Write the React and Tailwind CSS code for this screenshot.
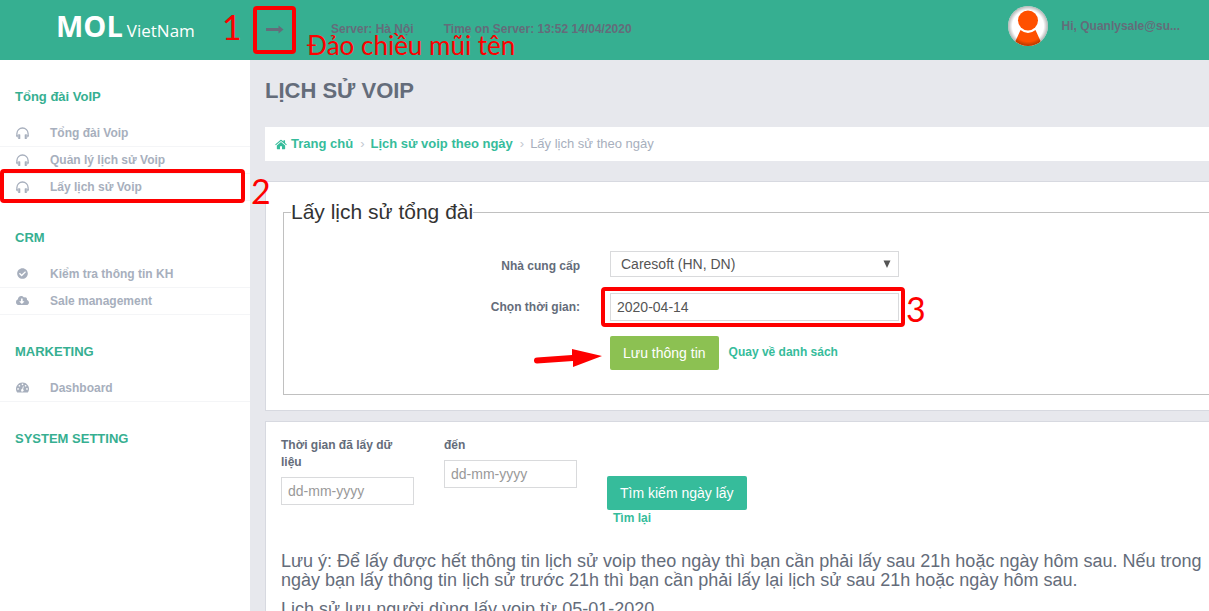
import React from "react";
import { FaCheckCircle, FaCloudDownloadAlt } from "react-icons/fa";

function HeadphonesIcon() {
  return (
    <svg viewBox="0 0 13 12" className="h-3 w-[13px]" fill="none" aria-hidden="true">
      <path d="M0.9 9.5V6.6a5.6 5.6 0 0 1 11.2 0v2.9" stroke="currentColor" strokeWidth="1.3" />
      <path
        d="M2.2 7.200h1.300q.8 0 .8.6v3.600q0 .6-.8.6H2.200zM10.800 7.200H9.500q-.8 0-.8.6v3.600q0 .6.8.6h1.300z"
        fill="currentColor"
      />
      <path d="M0.3 8h1.400v2.800Q.3 10.300.3 8zM12.700 8h-1.400v2.800q1.400-.5 1.400-2.800z" fill="currentColor" />
    </svg>
  );
}

function CheckIcon() {
  return <FaCheckCircle className="ml-px size-[11px]" aria-hidden="true" />;
}

function CloudIcon() {
  return <FaCloudDownloadAlt className="size-[13px]" aria-hidden="true" />;
}

function GaugeIcon() {
  return (
    <svg viewBox="0 0 14 11" className="h-[11px] w-[13px]" aria-hidden="true">
      <path d="M7 0a7 7 0 0 1 5.900 10.700q-.2.300-.5.300H1.600q-.3 0-.5-.3A7 7 0 0 1 7 0z" fill="currentColor" />
      <g fill="#fff">
        <circle cx="2.200" cy="7" r="0.900" />
        <circle cx="3.700" cy="3.600" r="0.900" />
        <circle cx="7" cy="2.100" r="0.900" />
        <circle cx="10.300" cy="3.600" r="0.900" />
        <circle cx="11.800" cy="7" r="0.900" />
        <path d="M7.500 4.200l.9.2-.8 3A1.400 1.400 0 1 1 6.700 7.200z" />
      </g>
    </svg>
  );
}

function HomeIcon() {
  return (
    <svg viewBox="0 0 13 11" className="h-[11px] w-3" fill="currentColor" aria-hidden="true">
      <path d="M6.500 2.800 11 6.500v3.600q0 .5-.5.500H7.600V7.500H5.400v3.100H2.500q-.5 0-.5-.5V6.500z" />
      <path d="M5.900.6q.6-.4 1.200 0L9.200 2.300V.8h1.700v3L12.800 5.400l-.7.800L6.500 1.600.9 6.200l-.7-.8z" />
    </svg>
  );
}

const sections = [
  {
    title: "Tổng đài VoIP",
    items: [
      { label: "Tổng đài Voip", Icon: HeadphonesIcon },
      { label: "Quản lý lịch sử Voip", Icon: HeadphonesIcon },
      { label: "Lấy lịch sử Voip", Icon: HeadphonesIcon, mark: "2" },
    ],
  },
  {
    title: "CRM",
    items: [
      { label: "Kiểm tra thông tin KH", Icon: CheckIcon },
      { label: "Sale management", Icon: CloudIcon },
    ],
  },
  { title: "MARKETING", items: [{ label: "Dashboard", Icon: GaugeIcon }] },
  { title: "SYSTEM SETTING", items: [] },
];

const noteFont = "font-['Lato','Open_Sans',sans-serif] font-normal text-[#fe0000] whitespace-nowrap pointer-events-none";

function Header() {
  return (
    <header className="flex h-[60px] shrink-0 items-center bg-[#36af91] text-xs font-bold text-[#646c7a]">
      <a
        href="#home"
        className="flex w-[250px] shrink-0 items-baseline gap-1 pb-2 pl-14 font-['Open_Sans',sans-serif] text-white"
      >
        <span className="text-[29px] leading-9 font-bold">MOL</span>
        <span className="text-[17px] font-normal">VietNam</span>
      </a>
      <div className="relative flex flex-1 items-center pb-[2px]">
        <button type="button" aria-label="Thu gọn menu" className="ml-4 flex h-6 w-[18px] items-center">
          <svg viewBox="0 0 18 9" className="h-[9px] w-[18px]" fill="currentColor" aria-hidden="true">
            <path d="M0 3h12.500V0.500L17.500 4.500l-5 4V6H0z" />
          </svg>
        </button>
        <span className="ml-[47px] whitespace-nowrap">Server: Hà Nội</span>
        <span className="ml-[30px] whitespace-nowrap">Time on Server: 13:52 14/04/2020</span>
        <span className="absolute -top-[11px] left-[3px] h-12 w-[43px] rounded-sm border-4 border-[#fe0000]" />
        <span className={`absolute -top-[10px] -left-7 text-[34px] leading-10 ${noteFont}`}>1</span>
        <span className={`absolute top-3 left-[57px] text-[26px] leading-8 ${noteFont}`}>Đảo chiều mũi tên</span>
      </div>
      <a href="#account" className="flex shrink-0 items-center gap-[14px] pr-[29px] pb-2">
        <svg viewBox="0 0 40 40" className="size-10" aria-hidden="true">
          <defs>
            <radialGradient id="rim">
              <stop offset="0.78" stopColor="#000" stopOpacity="0" />
              <stop offset="1" stopColor="#000" stopOpacity="0.3" />
            </radialGradient>
            <clipPath id="disc">
              <circle cx="20" cy="20" r="20" />
            </clipPath>
          </defs>
          <g clipPath="url(#disc)">
            <rect width="40" height="40" fill="#fff" />
            <circle cx="20" cy="14.5" r="10" fill="#ff5000" />
            <path d="M12.500 24q7.500 6 15 0L32.500 35v7h-25v-7z" fill="#ff5000" />
            <circle cx="20" cy="20" r="20" fill="url(#rim)" />
          </g>
        </svg>
        <span>Hi, Quanlysale@su...</span>
      </a>
    </header>
  );
}

function Sidebar() {
  return (
    <nav className="w-[250px] shrink-0 bg-white">
      {sections.map(({ title, items }) => (
        <section key={title}>
          <h2 className="pt-[27px] pb-[13px] pl-[15px] text-[13px] leading-5 font-bold text-[#36af91]">{title}</h2>
          <ul>
            {items.map(({ label, Icon, mark }) => (
              <li key={label} className="relative">
                <a
                  href="#menu"
                  className="flex h-[27px] items-center border-b border-[#f4f5f7] pb-px pl-4 text-xs font-bold text-[#a7afbd]"
                >
                  <span className="flex w-[34px]">
                    <Icon />
                  </span>
                  {label}
                </a>
                {mark && (
                  <>
                    <span className="absolute -top-[5px] left-0 h-[34px] w-[245px] rounded-sm border-4 border-[#fe0000]" />
                    <span className={`absolute -top-[3px] left-[251px] text-[34px] leading-10 ${noteFont}`}>{mark}</span>
                  </>
                )}
              </li>
            ))}
          </ul>
        </section>
      ))}
    </nav>
  );
}

function Breadcrumb() {
  return (
    <nav className="mt-5 flex h-[34px] items-center bg-white pl-[10px] text-[13px] text-[#a7afbd]">
      <a href="#home" className="flex items-center gap-1 font-bold text-[#36bc9b]">
        <HomeIcon />
        Trang chủ
      </a>
      <span className="pr-[6px] pl-[7px] text-[#c3c8d0]">›</span>
      <a href="#history" className="font-bold text-[#36bc9b]">
        Lịch sử voip theo ngày
      </a>
      <span className="pr-[6px] pl-[7px] text-[#c3c8d0]">›</span>
      <span>Lấy lịch sử theo ngày</span>
    </nav>
  );
}

const field = "border border-[#d9dadc] bg-white px-[6px] text-sm text-[#555] placeholder:text-[#999]";

function FetchForm() {
  return (
    <section className="mt-5 border border-r-0 border-[#d7d9e0] bg-white py-[15px] pl-[17px]">
      <fieldset className="border border-r-0 border-[#c0c0c0] pb-6 pl-[7px]">
        <legend className="text-[21px] leading-[30px] text-[#333]">Lấy lịch sử tổng đài</legend>
        <div className="mt-6 grid grid-cols-[289px_289px] gap-x-[30px] text-xs font-bold text-[#646c7a]">
          <label htmlFor="vendor" className="pt-[7px] text-right leading-[17px]">
            Nhà cung cấp
          </label>
          <div className="relative h-[26px] font-normal">
            <select id="vendor" className={`size-full appearance-none pl-[10px] ${field}`} defaultValue="caresoft">
              <option value="caresoft">Caresoft (HN, DN)</option>
            </select>
            <svg
              viewBox="0 0 8 8"
              className="pointer-events-none absolute top-[9px] right-2 size-2"
              fill="#555"
              aria-hidden="true"
            >
              <path d="M0.500 0.500h7L4 8z" />
            </svg>
          </div>
          <label htmlFor="date" className="mt-4 pt-[6px] text-right leading-[17px]">
            Chọn thời gian:
          </label>
          <div className="relative mt-4 h-7 font-normal">
            <input id="date" type="text" className={`size-full ${field}`} defaultValue="2020-04-14" />
            <span className="pointer-events-none absolute -top-[6px] -left-[9px] h-10 w-[304px] rounded-sm border-4 border-[#fe0000]" />
            <span className={`absolute -top-1 left-[296px] text-[34px] leading-10 ${noteFont}`}>3</span>
          </div>
          <div className="relative col-start-2 mt-[15px] flex gap-[10px]">
            <button type="submit" className="h-[34px] rounded-xs bg-[#8cc152] px-[13px] text-sm font-normal text-white">
              Lưu thông tin
            </button>
            <a href="#list" className="pt-[8px] leading-[17px] text-[#36bc9b]">
              Quay về danh sách
            </a>
            <svg viewBox="0 0 70 20" className="absolute top-3 -left-[77px] h-5 w-[70px]" fill="#fe0000" aria-hidden="true">
              <path d="M4 9.500 39 7V1l30 7L40 19v-6L4 15.500a3 3 0 0 1 0-6z" />
            </svg>
          </div>
        </div>
      </fieldset>
    </section>
  );
}

function SearchPanel() {
  return (
    <section className="mt-[10px] border border-r-0 border-[#d7d9e0] bg-white px-[15px] pt-[15px] pb-5 text-[#646c7a]">
      <form className="flex items-start gap-[30px] text-xs leading-[17px] font-bold">
        <div className="w-[133px]">
          <label htmlFor="from">Thời gian đã lấy dữ liệu</label>
          <input id="from" placeholder="dd-mm-yyyy" className={`mt-[6px] block h-7 w-full font-normal ${field}`} />
        </div>
        <div className="w-[133px]">
          <label htmlFor="to" className="block">
            đến
          </label>
          <input id="to" placeholder="dd-mm-yyyy" className={`mt-[6px] block h-7 w-full font-normal ${field}`} />
        </div>
        <div className="flex flex-col items-start pt-[39px]">
          <button type="button" className="h-[34px] rounded-xs bg-[#36bc9b] px-[13px] text-sm font-normal text-white">
            Tìm kiếm ngày lấy
          </button>
          <a href="#reset" className="pl-[6px] text-[#36bc9b]">
            Tìm lại
          </a>
        </div>
      </form>
      <p className="-mr-2 mt-[25px] text-lg leading-[19px]">
        Lưu ý: Để lấy được hết thông tin lịch sử voip theo ngày thì bạn cần phải lấy sau 21h hoặc ngày hôm sau. Nếu
        trong ngày bạn lấy thông tin lịch sử trước 21h thì bạn cần phải lấy lại lịch sử sau 21h hoặc ngày hôm sau.
      </p>
      <p className="mt-[10px] text-lg leading-[19px]">Lịch sử lưu người dùng lấy voip từ 05-01-2020</p>
    </section>
  );
}

export default function App() {
  return (
    <div className="flex h-screen flex-col overflow-hidden bg-[#e7e8ed] font-['Liberation_Sans',Arial,sans-serif]">
      <Header />
      <div className="flex min-h-0 flex-1">
        <Sidebar />
        <main className="min-w-0 flex-1 pl-[15px]">
          <h1 className="pt-[15px] text-[22px] leading-8 font-bold text-[#646c7a]">LỊCH SỬ VOIP</h1>
          <Breadcrumb />
          <FetchForm />
          <SearchPanel />
        </main>
      </div>
    </div>
  );
}
